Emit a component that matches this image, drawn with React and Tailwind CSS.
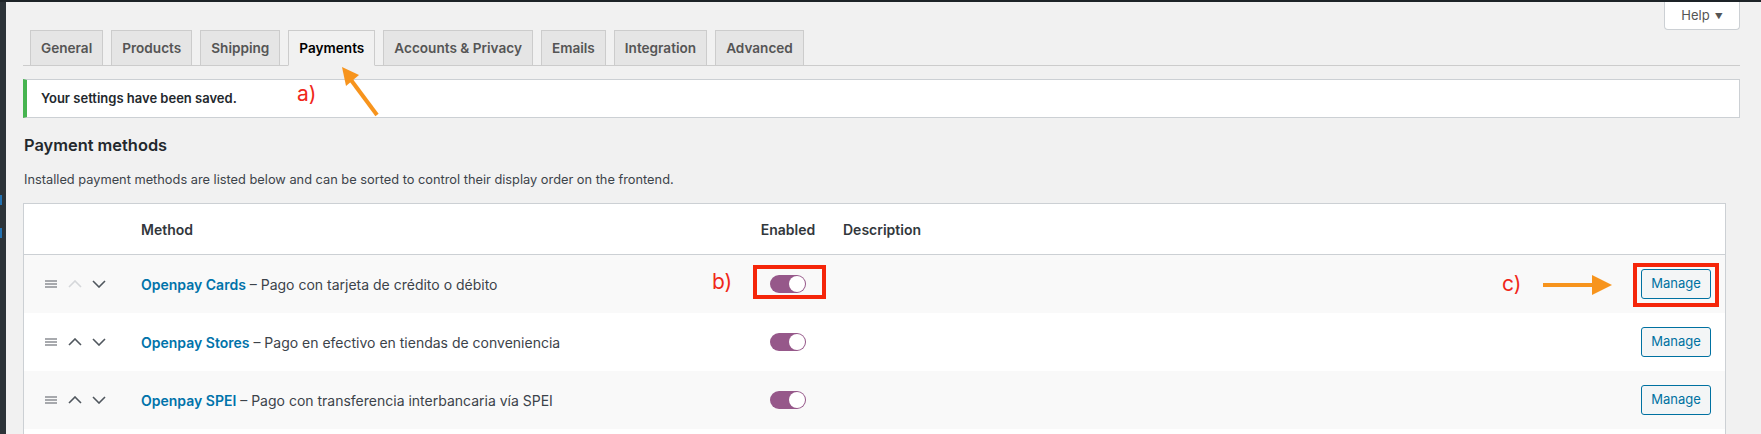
import { useState } from "react";

const tabs = [
	"General",
	"Products",
	"Shipping",
	"Payments",
	"Accounts & Privacy",
	"Emails",
	"Integration",
	"Advanced",
];

const methods = [
	{ name: "Openpay Cards", desc: "Pago con tarjeta de crédito o débito", first: true },
	{ name: "Openpay Stores", desc: "Pago en efectivo en tiendas de conveniencia" },
	{ name: "Openpay SPEI", desc: "Pago con transferencia interbancaria vía SPEI" },
];

function SortIcons({ first }) {
	return (
		<div className="flex items-center pl-[21px]">
			<svg width="12" height="8" viewBox="0 0 12 8" className="text-[#8c8f94]">
				<path d="M0 1h12M0 4h12M0 7h12" stroke="currentColor" strokeWidth="1.6" />
			</svg>
			<svg
				width="14"
				height="8"
				viewBox="0 0 14 8"
				className={`ml-[11px] ${first ? "text-[#d5d7da]" : "text-[#50575e]"}`}
			>
				<path d="M1 7l6-6 6 6" fill="none" stroke="currentColor" strokeWidth="1.6" />
			</svg>
			<svg width="14" height="8" viewBox="0 0 14 8" className="ml-[10px] text-[#50575e]">
				<path d="M1 1l6 6 6-6" fill="none" stroke="currentColor" strokeWidth="1.6" />
			</svg>
		</div>
	);
}

function Toggle() {
	return (
		<div className="w-[36px] h-[18px] rounded-full bg-[#96588a] flex items-center justify-end p-[1px]">
			<div className="w-[16px] h-[16px] rounded-full bg-white" />
		</div>
	);
}

export default function App() {
	const [active] = useState("Payments");

	return (
		<div className="relative w-[1761px] h-[434px] overflow-hidden bg-[#f1f1f1] text-[#23282d] font-['Inter','Roboto',sans-serif]">
			<div className="h-[2px] bg-[#1d2327]" />
			<div className="flex h-[432px]">
				{/* admin menu edge */}
				<aside className="w-[6px] shrink-0 bg-[#2c3338] flex flex-col">
					<div className="mt-[193px] h-[10px] w-[2px] bg-[#2271b1]" />
					<div className="mt-[23px] h-[10px] w-[2px] bg-[#2271b1]" />
				</aside>

				<main className="flex-1 pl-[17px] pr-[21px] flex flex-col">
					<div className="h-[28px] shrink-0 flex justify-end">
						<button className="w-[76px] h-full bg-white border border-t-0 border-[#ccd0d4] rounded-b-[4px] text-[13px] text-[#555] flex items-center justify-center gap-[5px]">
							Help <span className="text-[8px] leading-none">▼</span>
						</button>
					</div>

					<nav className="h-[36px] shrink-0 flex items-end gap-[8px] pl-[7px] border-b border-[#ccc]">
						{tabs.map((t) => (
							<div
								key={t}
								className={`h-[36px] mb-[-1px] px-[10px] flex items-center border text-[13.6px] font-semibold ${
									t === active
										? "bg-[#f1f1f1] border-[#ccc] border-b-[#f1f1f1] text-black"
										: "bg-[#e5e5e5] border-[#ccc] text-[#555]"
								}`}
							>
								{t}
							</div>
						))}
					</nav>

					<div className="mt-[13px] h-[39px] shrink-0 bg-white border border-[#ccd0d4] border-l-4 border-l-[#46b450] pl-[14px] flex items-center text-[13px] font-semibold">
						Your settings have been saved.
					</div>

					<h2 className="mt-[16px] h-[22px] shrink-0 leading-[22px] pl-[1px] text-[16.4px] font-semibold">
						Payment methods
					</h2>
					<p className="mt-[14px] h-[20px] shrink-0 leading-[20px] pl-[1px] text-[12.8px] text-[#3c434a]">
						Installed payment methods are listed below and can be sorted to control their display order on the frontend.
					</p>

					<section className="mt-[13px] mr-[14px] shrink-0 bg-white border border-[#ccd0d4]">
						<div className="h-[51px] border-b border-[#ccd0d4] grid grid-cols-[117px_610px_74px_1fr_auto] items-center text-[14px] font-semibold text-[#32373c]">
							<div />
							<div>Method</div>
							<div className="text-center">Enabled</div>
							<div className="pl-[18px]">Description</div>
							<div />
						</div>

						{methods.map((m, i) => (
							<div
								key={m.name}
								className={`h-[58px] grid grid-cols-[117px_610px_74px_1fr_auto] items-center text-[14px] ${
									i % 2 === 0 ? "bg-[#f9f9f9]" : "bg-white"
								}`}
							>
								<SortIcons first={m.first} />
								<div className="text-[#3c434a]">
									<a className="text-[#0073aa] font-semibold">{m.name}</a> – {m.desc}
								</div>
								<div className="flex justify-center">
									<Toggle />
								</div>
								<div />
								<div className="pr-[14px]">
									<button className="w-[70px] h-[30px] rounded-[3px] border border-[#0071a1] bg-[#f3f5f6] text-[#0071a1] text-[13px]">
										Manage
									</button>
								</div>
							</div>
						))}
						<div className="h-[58px] bg-white" />
					</section>
				</main>
			</div>

			{/* annotations */}
			<span className="absolute left-[297px] top-[82px] text-[21px] leading-[24px] text-[#f0281a]">a)</span>
			<span className="absolute left-[712px] top-[270px] text-[21px] leading-[24px] text-[#f0281a]">b)</span>
			<span className="absolute left-[1502px] top-[272px] text-[21px] leading-[24px] text-[#f0281a]">c)</span>
			<div className="absolute left-[753px] top-[265px] w-[73px] h-[34px] border-[4px] border-[#f5260a]" />
			<div className="absolute left-[1633px] top-[263px] w-[86px] h-[44px] border-[4px] border-[#f5260a]" />
			<svg className="absolute inset-0 pointer-events-none" width="1761" height="434">
				<line x1="377" y1="115" x2="351" y2="80" stroke="#f7941d" strokeWidth="4" />
				<polygon points="342,67 359,75 346,86" fill="#f7941d" />
				<line x1="1543" y1="285" x2="1594" y2="285" stroke="#f7941d" strokeWidth="4" />
				<polygon points="1612,285 1592,275 1592,295" fill="#f7941d" />
			</svg>
		</div>
	);
}
